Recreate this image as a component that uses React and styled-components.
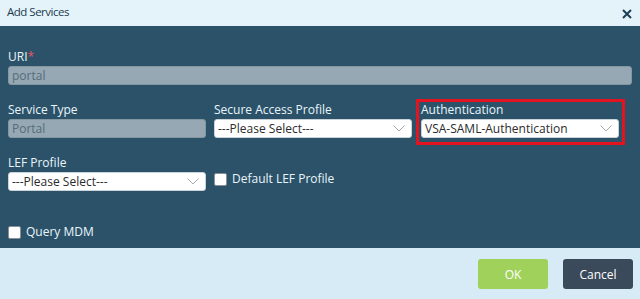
import React from 'react'
import styled, { createGlobalStyle } from 'styled-components'

const Global = createGlobalStyle`
  html, body {
    margin: 0;
    padding: 0;
    background: #2b5269;
  }
  body {
    font-family: "Open Sans", "Liberation Sans", sans-serif;
    font-size: 12px;
  }
`

const Dialog = styled.div`
  width: 640px;
  height: 299px;
  display: flex;
  flex-direction: column;
  overflow: hidden;
`

const Header = styled.div`
  height: 26px;
  flex: none;
  background: #e4f3fa;
  display: flex;
  align-items: center;
  justify-content: space-between;
  padding: 0 8px 0 7px;
  box-sizing: border-box;
`

const Title = styled.div`
  color: #1d3a4f;
  font-size: 11.5px;
  letter-spacing: -0.5px;
  line-height: 16px;
  margin-top: -3px;
`

const Close = styled.button`
  border: 0;
  background: none;
  padding: 0;
  width: 10px;
  height: 10px;
  margin-top: 1px;
  display: flex;
`

const Body = styled.div`
  flex: 1;
  background: #2b5269;
  padding: 23px 8px 0;
  box-sizing: border-box;
`

const Field = styled.div`
  display: flex;
  flex-direction: column;
  position: relative;
  ${p => p.$highlight && `
    &::after {
      content: '';
      position: absolute;
      top: -3px;
      left: -5px;
      right: -6px;
      bottom: -7px;
      border: 3px solid #e3141f;
    }
  `}
`

const Label = styled.label`
  color: #eaf5fb;
  line-height: 16px;
  margin-bottom: 1px;
  white-space: nowrap;
`

const Required = styled.span`
  color: #e9546b;
`

const ReadOnly = styled.div`
  height: 19px;
  box-sizing: border-box;
  background: #95a8b3;
  border: 1px solid #82979f;
  border-radius: 3px;
  color: #566d7a;
  padding: 0 3px;
  line-height: 17px;
`

const SelectBox = styled.div`
  height: 19px;
  box-sizing: border-box;
  background: #fff;
  border: 1px solid #c9d3d8;
  border-radius: 3px;
  color: #2b2b2b;
  padding: 0 6px 0 3px;
  line-height: 17px;
  display: flex;
  align-items: center;
  justify-content: space-between;
`

const Row = styled.div`
  display: grid;
  grid-template-columns: 198px 198px 199px;
  column-gap: 8px;
  margin-top: 17px;
  align-items: start;
  & > :nth-child(3) {
    margin-left: 1px;
  }
`

const CheckRow = styled.label`
  display: flex;
  align-items: flex-start;
  gap: 5px;
  color: #eaf5fb;
  line-height: 16px;
  padding-top: ${p => p.$top || 0}px;
  margin-top: ${p => p.$mt || 0}px;
`

const Box = styled.span`
  width: 13px;
  height: 13px;
  box-sizing: border-box;
  flex: none;
  background: #fff;
  border: 1px solid #8a9196;
  border-radius: 2px;
  margin-top: 2px;
`

const Footer = styled.div`
  height: 51px;
  flex: none;
  background: #d6ebf6;
  display: flex;
  justify-content: flex-end;
  align-items: flex-start;
  gap: 15px;
  padding: 11px 7px 0;
  box-sizing: border-box;
`

const Button = styled.button`
  width: 70px;
  height: 30px;
  border: 0;
  border-radius: 3px;
  font-family: inherit;
  font-size: 12px;
  color: #fff;
  background: ${p => (p.$primary ? '#a0d25b' : '#3a4a5b')};
`

const Chevron = () => (
  <svg width="12" height="7" viewBox="0 0 12 7">
    <polyline points="0.5,0.5 6,6 11.5,0.5" fill="none" stroke="#a5adb2" strokeWidth="1" />
  </svg>
)

const Select = ({ value }) => (
  <SelectBox>
    <span>{value}</span>
    <Chevron />
  </SelectBox>
)

export default function App() {
  return (
    <Dialog>
      <Global />
      <Header>
        <Title>Add Services</Title>
        <Close aria-label="close">
          <svg width="10" height="10" viewBox="0 0 10 10">
            <path d="M1 1 L9 9 M9 1 L1 9" stroke="#1c3d56" strokeWidth="2" />
          </svg>
        </Close>
      </Header>
      <Body>
        <Field>
          <Label>
            URI<Required>*</Required>
          </Label>
          <ReadOnly>portal</ReadOnly>
        </Field>

        <Row>
          <Field>
            <Label>Service Type</Label>
            <ReadOnly>Portal</ReadOnly>
          </Field>
          <Field>
            <Label>Secure Access Profile</Label>
            <Select value="---Please Select---" />
          </Field>
          <Field $highlight>
            <Label>Authentication</Label>
            <Select value="VSA-SAML-Authentication" />
          </Field>
        </Row>

        <Row>
          <Field>
            <Label>LEF Profile</Label>
            <Select value="---Please Select---" />
          </Field>
          <CheckRow $top={16}>
            <Box />
            Default LEF Profile
          </CheckRow>
        </Row>

        <CheckRow $mt={33}>
          <Box />
          Query MDM
        </CheckRow>
      </Body>
      <Footer>
        <Button $primary>OK</Button>
        <Button>Cancel</Button>
      </Footer>
    </Dialog>
  )
}
